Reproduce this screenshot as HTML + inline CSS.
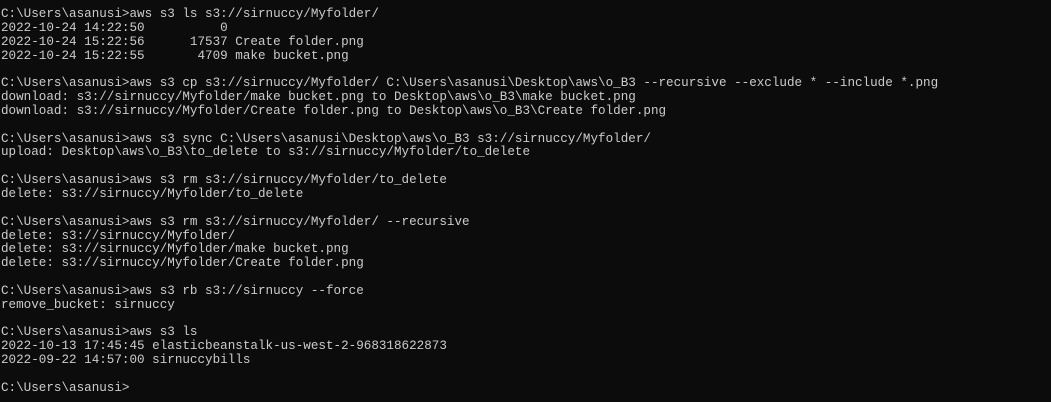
<!DOCTYPE html>
<html><head><style>
html,body{margin:0;padding:0;background:#0c0c0c;width:1051px;height:402px;overflow:hidden}
pre{margin:0;position:absolute;left:1px;top:8px;font-family:"Liberation Mono",monospace;font-size:12.6px;line-height:13.85px;color:#cccccc}
</style></head><body><pre>C:\Users\asanusi&gt;aws s3 ls s3://sirnuccy/Myfolder/
2022-10-24 14:22:50          0
2022-10-24 15:22:56      17537 Create folder.png
2022-10-24 15:22:55       4709 make bucket.png

C:\Users\asanusi&gt;aws s3 cp s3://sirnuccy/Myfolder/ C:\Users\asanusi\Desktop\aws\o_B3 --recursive --exclude * --include *.png
download: s3://sirnuccy/Myfolder/make bucket.png to Desktop\aws\o_B3\make bucket.png
download: s3://sirnuccy/Myfolder/Create folder.png to Desktop\aws\o_B3\Create folder.png

C:\Users\asanusi&gt;aws s3 sync C:\Users\asanusi\Desktop\aws\o_B3 s3://sirnuccy/Myfolder/
upload: Desktop\aws\o_B3\to_delete to s3://sirnuccy/Myfolder/to_delete

C:\Users\asanusi&gt;aws s3 rm s3://sirnuccy/Myfolder/to_delete
delete: s3://sirnuccy/Myfolder/to_delete

C:\Users\asanusi&gt;aws s3 rm s3://sirnuccy/Myfolder/ --recursive
delete: s3://sirnuccy/Myfolder/
delete: s3://sirnuccy/Myfolder/make bucket.png
delete: s3://sirnuccy/Myfolder/Create folder.png

C:\Users\asanusi&gt;aws s3 rb s3://sirnuccy --force
remove_bucket: sirnuccy

C:\Users\asanusi&gt;aws s3 ls
2022-10-13 17:45:45 elasticbeanstalk-us-west-2-968318622873
2022-09-22 14:57:00 sirnuccybills

C:\Users\asanusi&gt;</pre></body></html>
